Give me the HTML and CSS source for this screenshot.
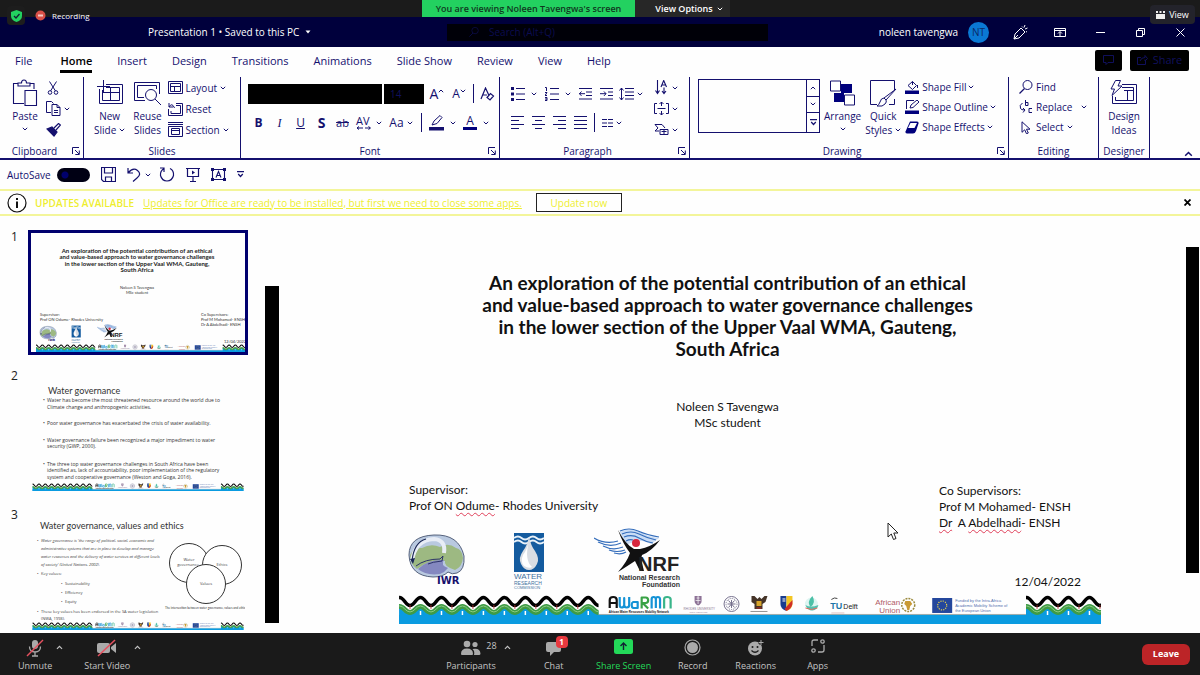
FILE: index.html
```html
<!DOCTYPE html>
<html lang="en">
<head>
<meta charset="utf-8">
<title>Presentation 1</title>
<link rel="stylesheet" href="styles.css">
</head>
<body>
<svg class="sprite" aria-hidden="true">
  <symbol id="chev" viewBox="0 0 6 4"><path d="M.8 .8 3 3 5.200 .8" fill="none" stroke="currentColor" stroke-width="1"/></symbol>
  <symbol id="chev-up" viewBox="0 0 6 4"><path d="M.8 3.200 3 1 5.200 3.200" fill="none" stroke="currentColor" stroke-width="1"/></symbol>
  <symbol id="launch" viewBox="0 0 8 8"><path d="M.5 7V.5H7M3 3l4 4M7.300 3.500v4h-4" fill="none" stroke="currentColor"/></symbol>
  <symbol id="paste" viewBox="0 0 26 28"><g fill="none" stroke="currentColor" stroke-width="1.100"><path d="M12 24.500H1.500V4.500h4M18 4.500h4V10M6 7V4h3.500Q9.500 1 12 1t2.500 3H18v3z"/><path d="M13 11.500h11.500v15H13z"/></g></symbol>
  <symbol id="cut" viewBox="0 0 14 14"><g fill="none" stroke="currentColor"><path d="M3.500 .5 9.500 10M10.500 .5 4.500 10"/><circle cx="4" cy="11.500" r="1.800"/><circle cx="10" cy="11.500" r="1.800"/></g></symbol>
  <symbol id="copy" viewBox="0 0 15 15"><g fill="none" stroke="currentColor"><path d="M5 11.500H.5V.5h5l2 2"/><path d="M6 3.500h5l3 3v8H6zM11 3.500v3h3M8 9.500h4M8 11.500h4"/></g></symbol>
  <symbol id="brush" viewBox="0 0 15 14"><path d="M1 6 8 13l3-4-5-5z" fill="currentColor"/><path d="M1 6l5-2 5 5-3 4zM8 5l4.500-4.500L14.500 2 10 7" fill="none" stroke="currentColor" stroke-width="1.200"/></symbol>
  <symbol id="newslide" viewBox="0 0 28 26"><g fill="none" stroke="currentColor"><path d="M3.500 9v14.500h23V4.500H10"/><path d="M6.500 10v10.500h17V7.500H10M6 12.500h17M14.500 8v12"/><path d="M7.500 0v13M1 6.500h13"/></g></symbol>
  <symbol id="reuse" viewBox="0 0 28 26"><g fill="none" stroke="currentColor"><path d="M26.500 14V2.500h-25v18H12M23.500 9V5.500h-19v12H11"/><circle cx="18" cy="15" r="5.500"/><path d="m22 19 6 6"/></g></symbol>
  <symbol id="layout" viewBox="0 0 15 13"><g fill="none" stroke="currentColor"><path d="M.5.500h14v12H.5zM2.500 2.500h10v8h-10zM3 5.500h9M6.500 5v5"/></g></symbol>
  <symbol id="reset" viewBox="0 0 15 14"><g fill="none" stroke="currentColor"><path d="M.5 7v6.500h14V1.500H8M3 9v2.500h9.500v-8H8M1 1v4h4M1 5q3-5 5.500 1"/></g></symbol>
  <symbol id="section" viewBox="0 0 15 15"><g fill="none" stroke="currentColor"><path d="M0 .5h15M0 2.500h15M.5 4.500h14v10H.5zM3.500 6.500h8v6h-8zM4 8.500h8"/></g></symbol>
  <symbol id="spacing" viewBox="0 0 18 14"><text x="1" y="9" font-size="11" fill="currentColor">AV</text><path d="M2 12h6M10 12h5M4 10.500 2 12l2 1.500M13.500 10.500l2 1.500-2 1.500" fill="none" stroke="currentColor" stroke-width="1"/></symbol>
  <symbol id="pen" viewBox="0 0 15 16"><path d="M3 10 5 6l6-5.500 2 2L8 8.500z" fill="none" stroke="currentColor"/><path d="M0 12h15v3.500H0z" fill="currentColor"/></symbol>
  <symbol id="clearfmt" viewBox="0 0 15 14"><path d="M1 12 5.500 1 9 8.500M2.500 8H7M7 10.500l3.500-4 3 2.500L10 13z" fill="none" stroke="currentColor" stroke-width="1.200"/></symbol>
  <symbol id="bullets" viewBox="0 0 14 14"><path d="M5 1.500h9M5 7h9M5 12.500h9" stroke="currentColor"/><path d="M0 0h3v3H0zM0 5.500h3v3H0zM0 11h3v3H0z" fill="currentColor"/></symbol>
  <symbol id="numbers" viewBox="0 0 14 14"><path d="M5 1.500h9M5 7h9M5 12.500h9M0 .5h1.500V4M0 5.500h2L0 8.500h2M0 10.500h2v3H0M0 12h2" fill="none" stroke="currentColor"/></symbol>
  <symbol id="outdent" viewBox="0 0 14 12"><path d="M0 .5h13M7 4h6M7 7.500h6M0 11h13M0 5.700h6M2.500 3.500 0.500 5.700l2 2.200" fill="none" stroke="currentColor"/></symbol>
  <symbol id="indent" viewBox="0 0 14 12"><path d="M0 .5h13M8 4h5M8 7.500h5M0 11h13M0 5.700h6M4 3.500l2 2.200-2 2.200" fill="none" stroke="currentColor"/></symbol>
  <symbol id="linesp" viewBox="0 0 15 14"><path d="M6 1.500h9M6 5h9M6 8.500h9M6 12h9M2.500 1v12M.5 3.500l2-2.500 2 2.500M.5 10.500l2 2.500 2-2.500" fill="none" stroke="currentColor"/></symbol>
  <symbol id="al" viewBox="0 0 13 13"><path d="M0 .5h13M0 4.500h8M0 8.500h13M0 12.500h8" stroke="currentColor"/></symbol>
  <symbol id="ac" viewBox="0 0 13 13"><path d="M0 .5h13M3 4.500h7M0 8.500h13M3 12.500h7" stroke="currentColor"/></symbol>
  <symbol id="ar" viewBox="0 0 13 13"><path d="M0 .5h13M5 4.500h8M0 8.500h13M5 12.500h8" stroke="currentColor"/></symbol>
  <symbol id="aj" viewBox="0 0 13 13"><path d="M0 .5h13M0 4.500h13M0 8.500h13M0 12.500h13" stroke="currentColor"/></symbol>
  <symbol id="cols" viewBox="0 0 11 8"><path d="M0 .5h5M0 4h5M0 7.500h5M6 .5h5M6 4h5M6 7.500h5" stroke="currentColor"/></symbol>
  <symbol id="textdir" viewBox="0 0 13 15"><path d="M2.500 0v13M.5 10.500l2 3 2-3M9 7.500v6M7 11l2 2.500 2-2.500M6 7 8.700.5 11.500 7M7 5h3.500" fill="none" stroke="currentColor" stroke-width="1.100"/></symbol>
  <symbol id="valign" viewBox="0 0 15 13"><path d="M3 1.500H.5v10H3M12 1.500h2.500v10H12M3.500 6.500h8M7.500 0v4M7.500 9v4M5.500 2l2-2 2 2M5.500 11l2 2 2-2" fill="none" stroke="currentColor"/></symbol>
  <symbol id="smart" viewBox="0 0 14 12"><path d="M.5.500h7l3 3.500M.5.500l3 3.500-3 3h4M5.500 5.500h8v5h-8zM7 7.500h5M9.500 6v4" fill="none" stroke="currentColor"/></symbol>
  <symbol id="arrange" viewBox="0 0 26 26"><path d="M11 4h11v9H11zM4 13h10v9H4z" fill="#00007c"/><path d="M.5 1h10v10H.5zM14.500 15h10v10h-10z" fill="#fff" stroke="currentColor"/></symbol>
  <symbol id="quick" viewBox="0 0 28 28"><path d="M8 25.500H1.500v-24h24V11M25.500 20v5.500H20" fill="none" stroke="currentColor"/><path d="M27 10 17 21l-2-2zM15 19q-3 0-4 4-1 3-3 4 6 1 8-2 2-2 1-4z" fill="#fff" stroke="currentColor"/></symbol>
  <symbol id="fill" viewBox="0 0 15 14"><path d="M3 5.500 7.500 1.500 11.500 5.500 7.500 9.500zM7.500 1.500V5M12.500 5v3" fill="none" stroke="currentColor"/><path d="M0 10.500h14V14H0z" fill="#00007c"/></symbol>
  <symbol id="outline" viewBox="0 0 15 14"><path d="M9 .5H1.500V9M5 8l1-3 6-5 2 2-6 5.500z" fill="none" stroke="currentColor"/><path d="M0 10.500h14V14H0z" fill="#00007c"/></symbol>
  <symbol id="effects" viewBox="0 0 15 13"><path d="M5 .5h7q2 0 1.500 2L11 10q-1 2.500-3 2.500H2q-2 0-1.500-2z" fill="#00007c"/><path d="M5.500 2h6.500L9.500 7H3z" fill="#fff"/></symbol>
  <symbol id="find" viewBox="0 0 14 14"><circle cx="8.500" cy="5" r="4.500" fill="none" stroke="currentColor"/><path d="M5.500 8.500.5 13.500" stroke="currentColor" stroke-width="1.200"/></symbol>
  <symbol id="replace" viewBox="0 0 14 14"><path d="M6.500 0v5.500h2.500v-3H6.500M13 8.500h-3v4h3M3.500 3Q0 5 1.500 8.500q1 1.500 4 1.500M4 8l2 2-2 2.500" fill="none" stroke="currentColor"/></symbol>
  <symbol id="select" viewBox="0 0 10 13"><path d="M1 .8v10.500l2.700-2.500 1.800 4 1.800-.8-1.800-3.800H9z" fill="none" stroke="currentColor"/></symbol>
  <symbol id="ideas" viewBox="0 0 28 26"><g fill="none" stroke="currentColor"><path d="M12 4.500h14.500v19h-24V16M12 7.500h11.500v13h-18V17M14 10.500h9M17.500 11v9"/><path d="M5.500.5h5L8 6h4L2 15.500 4.500 9H1z" fill="#fff"/></g></symbol>
  <symbol id="save" viewBox="0 0 15 15"><path d="M.5.500h14v14H2.500l-2-2zM3.500 1v5h8V1M4.500 14v-4h6v4" fill="none" stroke="currentColor" stroke-width="1.200"/></symbol>
  <symbol id="undo" viewBox="0 0 14 14"><path d="M1 0v5h5M1 5q5-6 9.500-2.500T10 10l-4 3.500" fill="none" stroke="currentColor" stroke-width="1.200"/></symbol>
  <symbol id="redo" viewBox="0 0 16 15"><path d="M1 1h4v4M5 1.500Q1 4 1.500 8.500 3 14 8 14t6.500-5.500Q15 3.500 11 1.500" fill="none" stroke="currentColor" stroke-width="1.200"/></symbol>
  <symbol id="present" viewBox="0 0 14 14"><path d="M0 .5h14M1.500.5v8h11v-8M7 8.500V13M4 13.500h6" fill="none" stroke="currentColor" stroke-width="1.200"/><path d="M6 2.500 9 4.500 6 6.500z" fill="currentColor"/></symbol>
  <symbol id="textbox" viewBox="0 0 15 13"><path d="M1.500 1.500h12v10h-12zM5 9.500l2.500-6 2.500 6M6 7.500h3" fill="none" stroke="currentColor" stroke-width="1.100"/><path d="M0 0h3v3H0zM12 0h3v3h-3zM0 10h3v3H0zM12 10h3v3h-3z" fill="currentColor"/></symbol>
  <symbol id="more" viewBox="0 0 7 7"><path d="M0 .7h7M1.200 3 3.500 5.500 5.800 3" fill="none" stroke="currentColor" stroke-width="1.200"/></symbol>

  <symbol id="wave" viewBox="0 0 200 30">
    <path d="M-10 17c4.500 0 6-5 10.500-5s6 5 10.500 5 6-5 10.500-5 6 5 10.500 5 6-5 10.500-5 6 5 10.500 5 6-5 10.500-5 6 5 10.500 5 6-5 10.500-5 6 5 10.500 5 6-5 10.500-5 6 5 10.500 5 6-5 10.500-5 6 5 10.500 5 6-5 10.500-5 6 5 10.500 5 6-5 10.500-5 6 5 10.500 5 6-5 10.500-5 6 5 10.500 5V30H-10z" fill="#0a9be0"/>
    <path d="M-10 18.500c4.500 0 6-6 10.500-6s6 6 10.500 6 6-6 10.500-6 6 6 10.500 6 6-6 10.500-6 6 6 10.500 6 6-6 10.500-6 6 6 10.500 6 6-6 10.500-6 6 6 10.500 6 6-6 10.500-6 6 6 10.500 6 6-6 10.500-6 6 6 10.500 6 6-6 10.500-6 6 6 10.500 6 6-6 10.500-6 6 6 10.500 6 6-6 10.500-6 6 6 10.500 6" fill="none" stroke="#3f9b46" stroke-width="5"/>
    <path d="M-10 18c4.500 0 6-6 10.500-6s6 6 10.500 6 6-6 10.500-6 6 6 10.500 6 6-6 10.500-6 6 6 10.500 6 6-6 10.500-6 6 6 10.500 6 6-6 10.500-6 6 6 10.500 6 6-6 10.500-6 6 6 10.500 6 6-6 10.500-6 6 6 10.500 6 6-6 10.500-6 6 6 10.500 6 6-6 10.500-6 6 6 10.500 6 6-6 10.500-6 6 6 10.500 6" fill="none" stroke="#8ccb7f" stroke-width="1"/>
    <path d="M-10 11.500c4.500 0 6-8 10.500-8s6 8 10.500 8 6-8 10.500-8 6 8 10.500 8 6-8 10.500-8 6 8 10.500 8 6-8 10.500-8 6 8 10.500 8 6-8 10.500-8 6 8 10.500 8 6-8 10.500-8 6 8 10.500 8 6-8 10.500-8 6 8 10.500 8 6-8 10.500-8 6 8 10.500 8 6-8 10.500-8 6 8 10.500 8 6-8 10.500-8 6 8 10.500 8" fill="none" stroke="#000" stroke-width="3.600"/>
    <path d="M21.500 17v4M42.500 17v4M63.500 17v4M84.500 17v4M105.500 17v4M126.500 17v4M147.500 17v4M168.500 17v4M189.500 17v4" stroke="#fff" stroke-width="1.500"/>
    <path d="M11 11v4M32 11v4M53 11v4M74 11v4M95 11v4M116 11v4M137 11v4M158 11v4M179 11v4" stroke="#b33" stroke-width=".8"/>
  </symbol>
  <symbol id="band" viewBox="0 0 703 30">
    <path d="M0 21h703v9H0z" fill="#0a9be0"/>
    <path d="M200 20.500h428" stroke="#9aa" stroke-width="1"/>
    <svg x="0" y="0" width="200" height="30"><use href="#wave" width="200" height="30"/></svg>
    <svg x="628" y="0" width="75" height="30"><use href="#wave" width="200" height="30"/></svg>
    <g fill="none" stroke-width="2.200" stroke-linejoin="round">
      <path d="M211 14V6q0-3 3.500-3T218 6v8M211 9h7" stroke="#111"/>
      <path d="M221 3v8q0 2.500 2 2.500t2.500-2.500V4 11q0 2.500 2.500 2.500t2.500-2.500V3" stroke="#1593d6"/>
      <path d="M239 8v6h-4.500q-1.500-.5-1.500-3t1.500-3z" stroke="#1593d6"/>
      <path d="M243 14.500V3.500h4q2.500 0 2.500 2.700T247 9h-3l5.500 5.500" stroke="#39a245"/>
      <path d="M253 14.500V5q0-2 2-2t2.200 2v9M257.200 5q0-2 2-2t2.200 2v9.500" stroke="#1593d6"/>
      <path d="M265.500 14.500V5q0-2 3-2t3.500 2v9.500" stroke="#39b58a"/>
    </g>
    <g font-family="Liberation Sans" font-weight="700">
      <text x="210" y="19" font-size="3" fill="#111">African Water Resources Mobility Network</text>
      <text x="285" y="16" font-size="3" fill="#86708f" font-weight="400">RHODES UNIVERSITY</text>
      <text x="291" y="19" font-size="2" fill="#86708f" font-weight="400">Where leaders learn</text>
    </g>
    <path d="M296 2h7v5q0 3-3.500 4.500Q296 10 296 7z" fill="#8d7296"/><path d="M298 4h3M297 6.500h5M299.500 2v8" stroke="#fff" stroke-width=".7"/>
    <g fill="none" stroke="#75708e"><circle cx="333" cy="10" r="7.500"/><circle cx="333" cy="10" r="5.500" stroke-dasharray="1 1"/><path d="M330 6.500l6 7M336 6.500l-6 7M333 6v8M329 10h8"/></g>
    <path d="M353 2h3l3 3 2-2 2 2 3-3h3l-2 6-3 2v5h-8v-5l-3-2z" fill="#453428"/><path d="M358 7h5v5h-5z" fill="#d7a52a"/><path d="M358 14h5" stroke="#b22"/><path d="M352 17.500h17" stroke="#777" stroke-width=".8"/>
    <path d="M382 2h6v15q-6-2-6-7z" fill="#183c8f"/><path d="M388 2h6v8q0 5-6 7z" fill="#f3c623"/><path d="m386 15 8-9v4q-1 5-6 7z" fill="#cf2e28"/><path d="M384 5h3M384 7h3" stroke="#fff"/>
    <circle cx="413" cy="10" r="6.500" fill="#dff5f2"/><path d="M414 2q4 7-2 11-4-5 2-11" fill="#4cc0a7"/><path d="M407 11q5 3 13 0-1 5-6 5.500-5 0-7-5.500" fill="#55bfae"/><path d="M407 14q6 3 12 0" stroke="#e36a5e" fill="none"/>
    <g font-family="Liberation Sans"><text x="432" y="15" font-size="9" font-weight="700" fill="#1c75a8">TU</text><text x="445" y="15" font-size="7" fill="#222">Delft</text></g>
    <path d="M433 5.500q3-2.500 6-1" stroke="#444" fill="none"/><path d="M433 19h13" stroke="#d9b3b3" stroke-width=".8"/>
    <g font-family="Liberation Sans" font-size="8" fill="#b05c66"><text x="477" y="11">African</text><text x="481" y="19">Union</text></g>
    <circle cx="510" cy="11" r="6.500" fill="none" stroke="#9b8a3d" stroke-width="1.500" stroke-dasharray="2 1"/><path d="M507 7h5l2 3-2 2-1 4h-2l-1-4-2-2z" fill="#c99a35"/>
    <path d="M534 4h20v15h-20z" fill="#24479c"/><circle cx="544" cy="11.500" r="4.500" fill="none" stroke="#e8d34a" stroke-width="1.200" stroke-dasharray="1.200 1.150"/>
    <g font-family="Liberation Sans" font-size="4" fill="#5270ae"><text x="557" y="8">Funded by the Intra-Africa</text><text x="557" y="13">Academic Mobility Scheme of</text><text x="557" y="18">the European Union</text></g>
  </symbol>
  <symbol id="iwr" viewBox="0 0 60 62">
    <path d="M3 27Q3 8 28 7t30 21q1 14-7 17-5 2-9-1-5 5-15 5Q4 48 3 27z" fill="#b9c9e0" stroke="#55627c"/>
    <path d="M4 27q4-8 12-7 9-5 18-1 8-5 16 1 6 1 7 10-1 9-8 12-12-4-10-9-16-2-28 8Q4 36 4 27z" fill="#9db982"/>
    <path d="M38 32q-16-1-26 9 8 7 22 5 5-2 8-6-8-3-4-8" fill="#8488c0"/>
    <path d="M6 33Q9 12 28 11q12 1 10 14" fill="none" stroke="#e8edf6" stroke-width="4"/>
    <path d="M6 33Q8 14 20 11" fill="none" stroke="#1b2857" stroke-width="1.200"/><path d="M4 31l3 5 2-6z" fill="#1b2857"/>
    <path d="M10 38q9-7 24-7l3-3-1 5q-10 1-14 3" stroke="#2c3468" fill="none"/>
    <text x="31" y="56" font-family="DejaVu Sans" font-size="10" font-weight="700" fill="#17106c">IWR</text>
  </symbol>
  <symbol id="wrc" viewBox="0 0 36 62">
    <path d="M2 5h30v39H2z" fill="#145b9f"/>
    <path d="M2 10q4-3 7.500 0t7.500 0 7.500 0 7.500 0M2 14q4-3 7.500 0t7.500 0 7.500 0 7.500 0" stroke="#e9f2fa" stroke-width="2" fill="none"/>
    <path d="M17 9q2 9 6 14 5 8 2 13-3 6-8 6t-8-6q-3-6 2-13 4-5 6-14z" fill="#d9dde3"/><path d="M17 13q-2 9-6 14-3 7 1 11 5 3 8 1-8-7-3-26" fill="#fff"/>
    <g font-family="Liberation Sans" fill="#43739f"><text x="2" y="51" font-size="8">WATER</text><text x="2" y="57" font-size="5">RESEARCH</text><text x="2" y="61" font-size="4">COMMISSION</text></g>
  </symbol>
  <symbol id="nrf" viewBox="0 0 90 62">
    <path d="M26 4q9-5 19 0t20 6l-8 6q-8-4-14-3l-12 4z" fill="#c9dcf5"/>
    <g fill="none" stroke="#356ebc" stroke-width="1.200"><path d="M0 10q12 7 24 3M4 14q12 6 23 1M9 18q10 5 20 1M15 22q8 3 16 0M20 25q7 2 12-1M26 3q9-4 18 0t21 6M28 6q9-4 17 0t17 6M30 9q8-3 15 1t14 5M32 13q4-2 7-1"/></g>
    <path d="M24 2Q32 17 40 21h6q10-2 20-9-8 11-18 15l-1 4 3 12h-4l-5-10q-6 4-17 11 9-10 12-19Q29 16 24 2z" fill="#111"/>
    <circle cx="42" cy="15" r="4" fill="#d7263d"/>
    <text x="44" y="43" font-family="Liberation Sans" font-weight="700" font-size="20" fill="#222">NRF</text>
    <g font-family="Liberation Sans" font-weight="700" font-size="7" fill="#333" text-anchor="end"><text x="86" y="52">National Research</text><text x="86" y="59">Foundation</text></g>
  </symbol>
</svg>

<header class="meeting-bar">
  <p class="viewing">You are viewing Noleen Tavengwa's screen</p>
  <button class="view-options">View Options <svg width="6" height="4"><use href="#chev"/></svg></button>
  <div class="meeting-status">
    <button class="shield" aria-label="Meeting security"><svg width="11" height="12" viewBox="0 0 11 12"><path d="M5.500 0 11 2v4q0 4-5.500 6Q0 10 0 6V2z" fill="#23d160"/><path d="m3 6 2 2 3.500-4" fill="none" stroke="#123" stroke-width="1.300"/></svg></button>
    <svg width="11" height="11" viewBox="0 0 11 11"><circle cx="5.500" cy="5.500" r="5" fill="#d84f48"/><path d="M3 4.500h5v2H3z" fill="#f6c9c4"/></svg>
    <span>Recording</span>
  </div>
  <button class="view-btn"><svg width="9" height="8" viewBox="0 0 9 8"><path d="M0 0h2v2H0zM3.500 0h2v2h-2zM7 0h2v2H7zM0 3h9v5H0z" fill="#eee"/></svg>View</button>
</header>

<div class="titlebar">
  <button class="doc-name">Presentation 1 • Saved to this PC <svg width="6" height="4" viewBox="0 0 6 4"><path d="M.5.500h5L3 3.500z" fill="#fff"/></svg></button>
  <div class="search"><svg width="10" height="10"><use href="#find"/></svg><input type="search" aria-label="Search" placeholder="Search (Alt+Q)"></div>
  <div class="account"><span>noleen tavengwa</span><span class="avatar">NT</span></div>
  <div class="window-tools">
    <button aria-label="Coming soon"><svg width="15" height="15" viewBox="0 0 15 15"><path d="M1 14 2 9l6-6 4 4-6 6zM1 14l4-4M9 1.500l1 1M12 0l-1 2.500M14.500 3l-2.500 1M13 6.500l1 .5" fill="none" stroke="#fff"/></svg></button>
    <button aria-label="Ribbon display"><svg width="12" height="9" viewBox="0 0 12 9"><path d="M.5.500h11v8H.5zM1 2.500h10M6 8V4M4 5.500l2-2 2 2" fill="none" stroke="#fff"/></svg></button>
    <button aria-label="Minimize"><svg width="9" height="9" viewBox="0 0 9 9"><path d="M0 4.500h9" stroke="#fff"/></svg></button>
    <button aria-label="Restore"><svg width="9" height="9" viewBox="0 0 9 9"><path d="M.5 2.500h6v6h-6zM2.500 2V.5h6v6H7" fill="none" stroke="#fff"/></svg></button>
    <button aria-label="Close"><svg width="9" height="9" viewBox="0 0 9 9"><path d="m.5.500 8 8M8.500.5l-8 8" stroke="#fff"/></svg></button>
  </div>
</div>

<nav class="tabs">
  <a href="#file">File</a><a href="#home" class="on">Home</a><a href="#insert">Insert</a><a href="#design">Design</a><a href="#transitions">Transitions</a><a href="#animations">Animations</a><a href="#show">Slide Show</a><a href="#review">Review</a><a href="#view">View</a><a href="#help">Help</a>
  <span class="tab-actions">
    <button class="dark comment" aria-label="Comments"><svg width="11" height="10" viewBox="0 0 11 10"><path d="M.5.500h10v7H5l-2 2v-2H.5z" fill="none" stroke="currentColor"/></svg></button>
    <button class="dark share"><svg width="11" height="10" viewBox="0 0 11 10"><path d="M4 2.500H.5v7h8V6M3 6q1-3.500 5-3.500V.5l2.500 3L8 6V4.500" fill="none" stroke="currentColor"/></svg>Share</button>
  </span>
</nav>

<div class="ribbon">
  <section class="group clipboard">
    <div class="body">
      <button class="big"><svg width="26" height="28"><use href="#paste"/></svg><span>Paste</span><svg width="6" height="4"><use href="#chev"/></svg></button>
      <div class="stack">
        <button aria-label="Cut"><svg width="14" height="14"><use href="#cut"/></svg></button>
        <button aria-label="Copy"><svg width="15" height="15"><use href="#copy"/></svg><svg width="6" height="4"><use href="#chev"/></svg></button>
        <button aria-label="Format painter"><svg width="15" height="14"><use href="#brush"/></svg></button>
      </div>
    </div>
    <h2>Clipboard</h2><button class="launcher" aria-label="Clipboard options"><svg width="8" height="8"><use href="#launch"/></svg></button>
  </section>
  <section class="group slides">
    <div class="body">
      <button class="big"><svg width="28" height="28"><use href="#newslide"/></svg><span>New</span><span>Slide <svg width="6" height="4"><use href="#chev"/></svg></span></button>
      <button class="big"><svg width="28" height="28"><use href="#reuse"/></svg><span>Reuse</span><span>Slides</span></button>
      <div class="stack">
        <button><svg width="15" height="13"><use href="#layout"/></svg>Layout <svg width="6" height="4"><use href="#chev"/></svg></button>
        <button><svg width="15" height="14"><use href="#reset"/></svg>Reset</button>
        <button><svg width="15" height="15"><use href="#section"/></svg>Section <svg width="6" height="4"><use href="#chev"/></svg></button>
      </div>
    </div>
    <h2>Slides</h2>
  </section>
  <section class="group font">
    <div class="body rows">
      <div class="row">
        <select class="combo face" aria-label="Font"><option></option></select>
        <select class="combo size" aria-label="Font size"><option>14</option></select>
        <button class="cell grow">A<svg width="6" height="4"><use href="#chev-up"/></svg></button>
        <button class="cell shrink">A<svg width="6" height="4"><use href="#chev"/></svg></button>
        <i class="sep"></i>
        <button class="cell" aria-label="Clear formatting"><svg width="15" height="14"><use href="#clearfmt"/></svg></button>
      </div>
      <div class="row">
        <button class="cell"><b>B</b></button>
        <button class="cell"><i class="serif">I</i></button>
        <button class="cell"><u>U</u></button>
        <button class="cell shadow"><b>S</b></button>
        <button class="cell strike"><s>ab</s></button>
        <button class="cell drop av" aria-label="Character spacing"><svg width="18" height="14"><use href="#spacing"/></svg><svg width="6" height="4"><use href="#chev"/></svg></button>
        <button class="cell drop aa">Aa<svg width="6" height="4"><use href="#chev"/></svg></button>
        <i class="sep"></i>
        <button class="cell drop wide" aria-label="Highlight"><svg width="15" height="16"><use href="#pen"/></svg><svg width="6" height="4"><use href="#chev"/></svg></button>
        <button class="cell drop wide"><span class="fontcolor">A</span><svg width="6" height="4"><use href="#chev"/></svg></button>
      </div>
    </div>
    <h2>Font</h2><button class="launcher" aria-label="Font options"><svg width="8" height="8"><use href="#launch"/></svg></button>
  </section>
  <section class="group paragraph">
    <div class="body">
      <div class="rows">
        <div class="row">
          <button class="cell drop wide" aria-label="Bullets"><svg width="14" height="14"><use href="#bullets"/></svg><svg width="6" height="4"><use href="#chev"/></svg></button>
          <button class="cell drop wide" aria-label="Numbering"><svg width="14" height="14"><use href="#numbers"/></svg><svg width="6" height="4"><use href="#chev"/></svg></button>
          <button class="cell" aria-label="Decrease indent"><svg width="14" height="12"><use href="#outdent"/></svg></button>
          <button class="cell" aria-label="Increase indent"><svg width="14" height="12"><use href="#indent"/></svg></button>
          <button class="cell drop" aria-label="Line spacing"><svg width="15" height="14"><use href="#linesp"/></svg><svg width="6" height="4"><use href="#chev"/></svg></button>
        </div>
        <div class="row">
          <button class="cell" aria-label="Align left"><svg width="13" height="13"><use href="#al"/></svg></button>
          <button class="cell" aria-label="Center"><svg width="13" height="13"><use href="#ac"/></svg></button>
          <button class="cell" aria-label="Align right"><svg width="13" height="13"><use href="#ar"/></svg></button>
          <button class="cell" aria-label="Justify"><svg width="13" height="13"><use href="#aj"/></svg></button>
          <i class="sep"></i>
          <button class="cell drop" aria-label="Columns"><svg width="11" height="8"><use href="#cols"/></svg><svg width="6" height="4"><use href="#chev"/></svg></button>
        </div>
      </div>
      <div class="stack">
        <button aria-label="Text direction"><svg width="15" height="15"><use href="#textdir"/></svg><svg width="6" height="4"><use href="#chev"/></svg></button>
        <button aria-label="Align text"><svg width="15" height="13"><use href="#valign"/></svg><svg width="6" height="4"><use href="#chev"/></svg></button>
        <button aria-label="Convert to SmartArt"><svg width="15" height="12"><use href="#smart"/></svg><svg width="6" height="4"><use href="#chev"/></svg></button>
      </div>
    </div>
    <h2>Paragraph</h2><button class="launcher" aria-label="Paragraph options"><svg width="8" height="8"><use href="#launch"/></svg></button>
  </section>
  <section class="group drawing">
    <div class="body">
      <div class="gallery"><div class="gallery-nav">
        <button aria-label="Previous shapes"><svg width="6" height="4"><use href="#chev-up"/></svg></button>
        <button aria-label="Next shapes"><svg width="6" height="4"><use href="#chev"/></svg></button>
        <button aria-label="All shapes"><svg width="7" height="7"><use href="#more"/></svg></button>
      </div></div>
      <button class="big"><svg width="26" height="28"><use href="#arrange"/></svg><span>Arrange</span><svg width="6" height="4"><use href="#chev"/></svg></button>
      <button class="big"><svg width="28" height="28"><use href="#quick"/></svg><span>Quick</span><span>Styles <svg width="6" height="4"><use href="#chev"/></svg></span></button>
      <div class="stack">
        <button><svg width="15" height="14"><use href="#fill"/></svg>Shape Fill <svg width="6" height="4"><use href="#chev"/></svg></button>
        <button><svg width="15" height="14"><use href="#outline"/></svg>Shape Outline <svg width="6" height="4"><use href="#chev"/></svg></button>
        <button><svg width="15" height="13"><use href="#effects"/></svg>Shape Effects <svg width="6" height="4"><use href="#chev"/></svg></button>
      </div>
    </div>
    <h2>Drawing</h2><button class="launcher" aria-label="Drawing options"><svg width="8" height="8"><use href="#launch"/></svg></button>
  </section>
  <section class="group editing">
    <div class="body"><div class="stack">
      <button><svg width="14" height="14"><use href="#find"/></svg>Find</button>
      <button class="replace"><svg width="14" height="14"><use href="#replace"/></svg>Replace <svg width="6" height="4"><use href="#chev"/></svg></button>
      <button><svg width="14" height="13"><use href="#select"/></svg>Select <svg width="6" height="4"><use href="#chev"/></svg></button>
    </div></div>
    <h2>Editing</h2>
  </section>
  <section class="group designer">
    <div class="body"><button class="big"><svg width="28" height="28"><use href="#ideas"/></svg><span>Design</span><span>Ideas</span></button></div>
    <h2>Designer</h2>
  </section>
  <button class="collapse" aria-label="Collapse ribbon"><svg width="9" height="6"><use href="#chev-up"/></svg></button>
</div>

<div class="quickbar">
  <label class="autosave">AutoSave <input type="checkbox" role="switch"></label>
  <button aria-label="Save"><svg width="15" height="15"><use href="#save"/></svg></button>
  <button class="undo" aria-label="Undo"><svg width="14" height="14"><use href="#undo"/></svg><svg width="6" height="4"><use href="#chev"/></svg></button>
  <button aria-label="Redo"><svg width="16" height="15"><use href="#redo"/></svg></button>
  <button aria-label="Start slide show"><svg width="14" height="14"><use href="#present"/></svg></button>
  <button aria-label="Text box"><svg width="15" height="13"><use href="#textbox"/></svg></button>
  <button aria-label="Customize toolbar"><svg width="7" height="7"><use href="#more"/></svg></button>
</div>

<div class="notice">
  <svg width="20" height="20" viewBox="0 0 20 20"><circle cx="10" cy="10" r="9" fill="#fff" stroke="#111" stroke-width="1.200"/><path d="M10 5v2M10 8.500V15" stroke="#111" stroke-width="2"/></svg>
  <strong>UPDATES AVAILABLE</strong>
  <a href="#updates">Updates for Office are ready to be installed, but first we need to close some apps.</a>
  <button class="update">Update now</button>
  <button class="dismiss" aria-label="Dismiss"><svg width="7" height="7" viewBox="0 0 7 7"><path d="m.5.500 6 6M6.500.5l-6 6" stroke="#000" stroke-width="1.800"/></svg></button>
</div>

<main class="workspace">
  <ol class="thumbs">
    <li><span>1</span>
      <svg class="thumb on" viewBox="0 0 214 119">
        <g class="t1" text-anchor="middle"><text x="106" y="20">An exploration of the potential contribution of an ethical</text><text x="106" y="26">and value-based approach to water governance challenges</text><text x="106" y="33">in the lower section of the Upper Vaal WMA, Gauteng,</text><text x="106" y="39">South Africa</text></g>
        <g class="t2"><g text-anchor="middle"><text x="106" y="56">Noleen S Tavengwa</text><text x="106" y="61">MSc student</text></g>
        <text x="9" y="83">Supervisor:</text><text x="9" y="88">Prof ON Odume- Rhodes University</text><text x="170" y="83">Co Supervisors:</text><text x="170" y="88">Prof M Mohamed- ENSH</text><text x="170" y="93">Dr A Abdelhadi- ENSH</text><text x="193" y="110">12/04/2022</text></g>
        <use href="#iwr" x="8" y="91" width="18" height="19"/><use href="#wrc" x="40" y="91" width="11" height="19"/><use href="#nrf" x="66" y="91" width="27" height="19"/>
        <use href="#band" x="5" y="111" width="209" height="9"/>
      </svg></li>
    <li><span>2</span>
      <svg class="thumb" viewBox="0 0 214 119">
        <text class="th" x="17" y="22">Water governance</text>
        <g class="t3"><text x="12" y="30">•</text><text x="16" y="30">Water has become the most threatened resource around the world due to</text><text x="16" y="37">Climate change and anthropogenic activities.</text>
        <text x="12" y="53">•</text><text x="16" y="53">Poor water governance has exacerbated the crisis of water availability.</text>
        <text x="12" y="70">•</text><text x="16" y="70">Water governance failure been recognized a major impediment to water</text><text x="16" y="76">security (GWP, 2000).</text>
        <text x="12" y="94">•</text><text x="16" y="94">The three top water governance challenges in South Africa have been</text><text x="16" y="100">identified as, lack of accountability, poor implementation of the regulatory</text><text x="16" y="107">system and cooperative governance (Weston and Goga, 2016).</text></g>
        <use href="#band" x="0" y="111" width="214" height="9"/>
      </svg></li>
    <li><span>3</span>
      <svg class="thumb" viewBox="0 0 214 119">
        <text class="th" x="9" y="18">Water governance, values and ethics</text>
        <g class="t4"><text x="6" y="31">•</text><g font-style="italic"><text x="10" y="31">Water governance is 'the range of political, social, economic and</text><text x="10" y="39">administrative systems that are in place to develop and manage</text><text x="10" y="47">water resources and the delivery of water services at different levels</text><text x="10" y="55">of society' (United Nations, 2002).</text></g>
        <text x="6" y="64">•</text><text x="10" y="64">Key values:</text><text x="30" y="74">•</text><text x="34" y="74">Sustainability</text><text x="30" y="83">•</text><text x="34" y="83">Efficiency</text><text x="30" y="92">•</text><text x="34" y="92">Equity</text>
        <text x="6" y="102">•</text><text x="10" y="102">These key values has been endorsed in the SA water legislation</text><text x="10" y="109">(NWA, 1998).</text></g>
        <g fill="#fff" stroke="#333"><circle cx="158" cy="52" r="19.500"/><circle cx="191" cy="54" r="19.500"/><circle cx="175" cy="73" r="19.500"/></g>
        <g class="t4" text-anchor="middle"><text x="158" y="50">Water</text><text x="157" y="55">governance</text><text x="191" y="55">Ethics</text><text x="175" y="74">Values</text></g>
        <text class="t5" x="134" y="98">The intersection between water governance, values and ethics</text>
        <use href="#band" x="0" y="111" width="214" height="9"/>
      </svg></li>
  </ol>
  <div class="pane-scroll"></div>
  <article class="slide">
    <h1>An exploration of the potential contribution of an ethical<br>and value-based approach to water governance challenges<br>in the lower section of the Upper Vaal WMA, Gauteng,<br>South Africa</h1>
    <p class="author">Noleen S Tavengwa<br>MSc student</p>
    <div class="credits">
      <div class="left">
        <p>Supervisor:<br>Prof ON <span class="typo">Odume</span>- Rhodes University</p>
        <div class="logos"><svg width="60" height="62"><use href="#iwr"/></svg><svg width="36" height="62"><use href="#wrc"/></svg><svg width="90" height="62"><use href="#nrf"/></svg></div>
      </div>
      <div class="right">
        <p>Co Supervisors:<br>Prof M Mohamed- ENSH<br><span class="typo">Dr</span>&nbsp; A <span class="typo">Abdelhadi</span>- ENSH</p>
        <time>12/04/2022</time>
      </div>
    </div>
    <svg class="band" viewBox="0 0 703 30"><use href="#band"/></svg>
    <svg class="cursor" width="12" height="19" viewBox="0 0 12 19"><path d="M1 1v14l3.300-3 2.200 5.500 2.500-1L6.800 11H11z" fill="#fff" stroke="#222"/></svg>
  </article>
  <div class="slide-scroll"></div>
</main>

<footer class="controls">
  <div class="side">
    <button><svg width="18" height="18" viewBox="0 0 18 18"><rect x="6" y="1" width="6" height="9" rx="3" fill="#aaa"/><path d="M3.500 7.500q0 5.500 5.500 5.500t5.500-5.500M9 13v4M6 17h6" fill="none" stroke="#aaa" stroke-width="1.300"/><path d="M1 17 17 1" stroke="#e5505f" stroke-width="1.500"/></svg>Unmute</button>
    <button class="caret" aria-label="Audio options"><svg width="7" height="5"><use href="#chev-up"/></svg></button>
    <button class="video"><svg width="20" height="18" viewBox="0 0 20 18"><rect x="0" y="4" width="13" height="10" rx="2" fill="#aaa"/><path d="m14 8 5-4v10l-5-4z" fill="#aaa"/><path d="M1 17 18 1" stroke="#e5505f" stroke-width="1.500"/></svg>Start Video</button>
    <button class="caret" aria-label="Video options"><svg width="7" height="5"><use href="#chev-up"/></svg></button>
  </div>
  <div class="mid">
    <button class="people"><span class="ic"><svg width="20" height="15" viewBox="0 0 20 15"><g fill="#aaa"><circle cx="6" cy="4" r="3.300"/><circle cx="14" cy="4.500" r="2.600"/><path d="M0 14q0-5.500 6-5.500t6 5.500q0 1-1 1H1q-1 0-1-1zM13 15q1-4-1.500-6 7.500-1.500 8 4.500 0 1.500-1.500 1.500z"/></g></svg><em>28</em></span>Participants</button>
    <button class="caret" aria-label="Participant options"><svg width="7" height="5"><use href="#chev-up"/></svg></button>
    <button class="chat"><svg width="18" height="17" viewBox="0 0 18 17"><path d="M3 3h11q2 0 2 2v6q0 2-2 2H9l-4 4v-4H3q-2 0-2-2V5q0-2 2-2z" fill="#aaa"/></svg><b class="badge">1</b>Chat</button>
    <button class="share-screen"><svg width="19" height="15" viewBox="0 0 19 15"><rect width="19" height="15" rx="2.500" fill="#23d959"/><path d="M9.500 11V4M6.500 7l3-3 3 3" fill="none" stroke="#123" stroke-width="1.400"/></svg>Share Screen</button>
    <button class="record"><svg width="17" height="17" viewBox="0 0 17 17"><circle cx="8.500" cy="8.500" r="7.500" fill="none" stroke="#aaa" stroke-width="1.200"/><circle cx="8.500" cy="8.500" r="5.500" fill="#aaa"/></svg>Record</button>
    <button class="react"><svg width="17" height="17" viewBox="0 0 17 17"><circle cx="8" cy="9.500" r="7" fill="#aaa"/><circle cx="5.500" cy="8" r="1" fill="#1a1a1a"/><circle cx="10.500" cy="8" r="1" fill="#1a1a1a"/><path d="M4.500 11.500q3.500 3.500 7 0" stroke="#1a1a1a" fill="none" stroke-width="1.200"/><path d="M14 0v6M11 3h6" stroke="#1a1a1a" stroke-width="3"/><path d="M14 1v5M11.500 3.500h5" stroke="#aaa"/></svg>Reactions</button>
    <button class="apps"><svg width="14" height="14" viewBox="0 0 14 14"><g fill="none" stroke="#aaa" stroke-width="1.300"><path d="M7 1H3Q1 1 1 3v4M13 6v5q0 2-2 2H7"/><circle cx="11.500" cy="2.500" r="1.700"/><circle cx="2.500" cy="11.500" r="1.700"/></g></svg>Apps</button>
  </div>
  <button class="leave">Leave</button>
</footer>
</body>
</html>
```
FILE: styles.css
```css
* { box-sizing: border-box; }
body {
  margin: 0;
  min-height: 100vh;
  display: flex;
  flex-direction: column;
  background: #fefefe;
  color: #14106e;
  font-family: "Open Sans", "Noto Sans", sans-serif;
  font-size: 10px;
  line-height: 14px;
}
.sprite { display: none; }
svg { flex: none; }
h1, h2, p, ol { margin: 0; padding: 0; font-weight: 400; }
button {
  display: inline-flex;
  align-items: center;
  justify-content: center;
  padding: 0;
  border: 0;
  background: none;
  color: inherit;
  font: inherit;
  white-space: nowrap;
}
a { color: inherit; text-decoration: none; }

/* meeting bar */
.meeting-bar {
  position: relative;
  z-index: 2;
  display: flex;
  justify-content: center;
  height: 17px;
  padding-right: 48px;
  background: #1b1b1b;
  color: #fff;
  font-size: 9px;
}
.viewing {
  width: 213px;
  background: #23d160;
  color: #10381f;
  font-weight: 600;
  line-height: 17px;
  text-align: center;
  white-space: nowrap;
}
.view-options { width: 95px; padding-left: 13px; gap: 4px; background: #272727; font-weight: 600; }
.meeting-status { position: absolute; left: 7px; top: 6px; display: flex; align-items: center; gap: 6px; font-size: 8px; }
.shield { width: 18px; height: 19px; margin-right: 4px; border-radius: 4px; background: #1d1d1d; }
.view-btn { position: absolute; right: 5px; top: 5px; width: 45px; height: 19px; gap: 4px; border-radius: 4px; background: #23232b; }

/* title bar */
.titlebar { display: flex; align-items: center; height: 30px; padding-left: 148px; background: #00003c; color: #fff; }
.doc-name { gap: 6px; width: 162px; justify-content: flex-start; }
.search {
  display: flex;
  align-items: center;
  gap: 10px;
  flex: 0 1 321px;
  height: 17px;
  margin-left: 137px;
  padding-left: 22px;
  background: #000008;
  color: #0c0c50;
}
.search input { width: 200px; border: 0; padding: 0; background: none; font: inherit; color: inherit; }
.search input::placeholder { color: #0c0c50; opacity: 1; }
.account { display: flex; align-items: center; gap: 10px; margin-left: auto; }
.avatar { width: 21px; height: 21px; border-radius: 50%; background: #0a78d4; color: #0a2a66; line-height: 21px; text-align: center; }
.window-tools { display: flex; margin-left: 11px; }
.window-tools button { width: 40px; height: 30px; }

/* tabs */
.tabs { display: flex; align-items: center; gap: 25px; height: 26px; padding: 0 11px 0 15px; font-size: 11px; }
.tabs a { padding: 5px 0 1px; line-height: 16px; border-bottom: 3px solid transparent; white-space: nowrap; }
.tabs .on { margin-left: 3px; border-color: #000; color: #000; font-weight: 600; }
.tab-actions { display: flex; gap: 8px; margin-left: auto; }
.dark { height: 21px; gap: 5px; border-radius: 2px; background: #000; color: #10105c; }
.comment { width: 27px; }
.share { width: 59px; }

/* ribbon */
.ribbon {
  display: grid;
  grid-template-columns: 84fr 157fr 259fr 190fr 319fr 90fr 51fr 50fr;
  height: 87px;
  border-bottom: 2px solid #14106e;
}
.group { position: relative; margin: 4px 0 2px; border-right: 1px solid #14106e; }
.group h2 { font-size: 10px; line-height: 14px; text-align: center; padding-top: 1px; }
.body { display: flex; height: 66px; }
.launcher { position: absolute; right: 3px; bottom: 3px; }
.big { flex-direction: column; justify-content: flex-start; padding-top: 2px; }
.big > svg:first-child { margin-bottom: 2px; }
.big > svg:last-child { margin-top: 4px; }
.big span { display: flex; align-items: center; gap: 3px; }
.stack { display: flex; flex-direction: column; align-items: flex-start; }
.stack button { height: 21px; gap: 3px; }
.rows { display: flex; flex-direction: column; }
.row { display: flex; align-items: center; height: 29px; }
.cell { width: 21px; height: 21px; font-size: 12px; }
.sep { width: 1px; height: 19px; margin: 0 3px; background: #14106e; }
.drop { width: 27px; gap: 3px; }
.clipboard .body { padding-left: 12px; gap: 8px; }
.clipboard h2 { padding-right: 14px; }
.slides .body { padding-left: 10px; gap: 8px; }
.slides .stack { margin-left: -2px; }
.font .body { padding: 2px 0 0 7px; }
.combo { appearance: none; height: 20px; margin-right: 2px; padding: 0 6px; border: 0; border-radius: 0; background: #000; color: #10105c; font: inherit; }
.face { width: 134px; }
.size { width: 40px; }
.grow, .shrink { width: 22px; }
.grow { font-size: 14px; }
.grow svg, .shrink svg { margin-bottom: 6px; }
.serif { font-family: "Liberation Serif", serif; }
.shadow { font-size: 14px; }
.strike { font-size: 11px; }
.av { width: 31px; }
.aa { width: 34px; }
.wide { width: 34px; gap: 6px; }
.fontcolor { width: 14px; border-bottom: 3px solid #00007c; line-height: 12px; }
.paragraph .body { padding: 2px 0 0 7px; gap: 10px; }
.paragraph .stack { margin-top: -2px; }
.paragraph h2 { padding-right: 14px; }
.drawing .body { padding: 2px 0 0 8px; gap: 4px; }
.drawing h2 { padding-right: 14px; }
.gallery { display: flex; justify-content: flex-end; width: 122px; height: 54px; border: 1px solid #14106e; }
.gallery-nav { display: grid; width: 13px; border-left: 1px solid #14106e; }
.gallery-nav button + button { border-top: 1px solid #14106e; }
.drawing .big, .drawing .stack { margin-top: -2px; }
.drawing .stack button, .editing .stack button { height: 20px; }
.drawing .stack button { gap: 2px; }
.editing .body { padding-left: 10px; }
.editing .replace svg:last-child { margin-left: 6px; }
.designer .body { justify-content: center; }
.collapse { align-self: end; justify-self: end; margin: 0 7px 3px 0; }

/* quick access */
.quickbar { display: flex; align-items: center; gap: 11px; height: 29px; padding-left: 7px; }
.autosave { display: flex; align-items: center; gap: 6px; }
.autosave input { appearance: none; width: 33px; height: 14px; margin: 0; border-radius: 7px; background: radial-gradient(circle at 8px 7px, #00006c 3px, #000014 4px); }
.undo { gap: 4px; margin-right: -3px; }

/* update notice */
.notice {
  display: flex;
  align-items: center;
  height: 27px;
  padding: 0 9px 0 7px;
  border: solid #f3f59a;
  border-width: 2px 0;
  color: #eeee30;
}
.notice strong { margin: 0 9px 0 8px; font-weight: 600; }
.notice a { text-decoration: underline; }
.update { width: 86px; height: 19px; margin-left: 14px; border: 1px solid #222; }
.dismiss { margin-left: auto; }

/* workspace */
.workspace { display: flex; flex: 1; color: #222; }
.thumbs { display: flex; flex-direction: column; gap: 14px; width: 265px; padding: 14px 17px 0 11px; list-style: none; }
.thumbs li { display: flex; font-size: 12px; line-height: 13px; }
.thumbs li span { flex: 0 0 17px; }
.thumb { flex: 1; height: 125px; border: 3px solid transparent; font-family: Lato, sans-serif; }
.thumb.on { border-color: #00006e; }
.t1 { font-size: 6px; font-weight: 700; fill: #222; }
.t2 { font-size: 4px; fill: #333; }
.t3 { font-family: "Open Sans", sans-serif; font-size: 5px; fill: #333; }
.t4 { font-family: "Open Sans", sans-serif; font-size: 4px; fill: #444; }
.t5 { font-size: 3px; fill: #333; }
.th { font-size: 9px; fill: #333; }
.pane-scroll { flex: 0 0 14px; margin: 70px 0 10px; background: #000; }
.slide-scroll { flex: 0 0 13px; margin: 31px 1px 60px 0; background: #000; }
.slide {
  position: relative;
  flex: 1;
  margin: 0 85px 0 120px;
  padding-top: 56px;
  color: #111;
  font-family: Lato, sans-serif;
  font-size: 12px;
  line-height: 16px;
}
.slide h1, .author { padding-right: 45px; text-align: center; }
.slide h1 { font-size: 19px; font-weight: 700; line-height: 22px; }
.author { margin-top: 39px; }
.credits { display: flex; justify-content: space-between; margin: 51px 20px 4px 10px; }
.logos { display: flex; align-items: flex-start; height: 62px; margin: 14px 0 0 -3px; }
.logos svg + svg { margin-left: 46px; }
.right { display: flex; flex-direction: column; justify-content: space-between; width: 142px; padding-top: 1px; }
.right time { align-self: flex-end; }
.typo { text-decoration: underline wavy #e0405a 1px; text-underline-offset: 2px; }
.band { display: block; width: 100%; }
.cursor { position: absolute; left: 69.500%; top: 306px; }

/* meeting controls */
.controls {
  display: grid;
  grid-template-columns: 1fr auto 1fr;
  align-items: stretch;
  height: 42px;
  background: #1a1a1a;
  color: #c4c4c4;
  font-size: 9px;
}
.controls button { flex-direction: column; justify-content: flex-end; padding-bottom: 2px; gap: 1px; }
.controls button > svg { margin-bottom: auto; margin-top: 6px; }
.side, .mid { display: flex; }
.side { padding-left: 18px; }
.side .video { margin-left: 18px; }
.controls .caret { width: 14px; }
.controls .caret > svg { margin-top: 12px; }
.mid { padding-left: 96px; }
.mid .caret { width: 22px; }
.ic { display: flex; gap: 5px; margin: 7px 0 auto; }
.ic em { font-style: normal; line-height: 12px; }
.people .ic { padding-left: 16px; }
.chat, .share-screen { width: 70px; }
.record { width: 68px; }
.react { width: 58px; }
.apps { width: 66px; }
.chat { position: relative; }
.badge { position: absolute; left: 37px; top: 3px; width: 12px; height: 12px; border-radius: 4px; background: #e8393f; color: #fff; font-size: 8px; line-height: 12px; }
.controls .share-screen { color: #23d959; }
.controls .leave { justify-self: end; align-self: center; width: 48px; height: 21px; margin-right: 10px; padding: 0; justify-content: center; border-radius: 6px; background: #bc2427; color: #fff; font-weight: 700; }
```
